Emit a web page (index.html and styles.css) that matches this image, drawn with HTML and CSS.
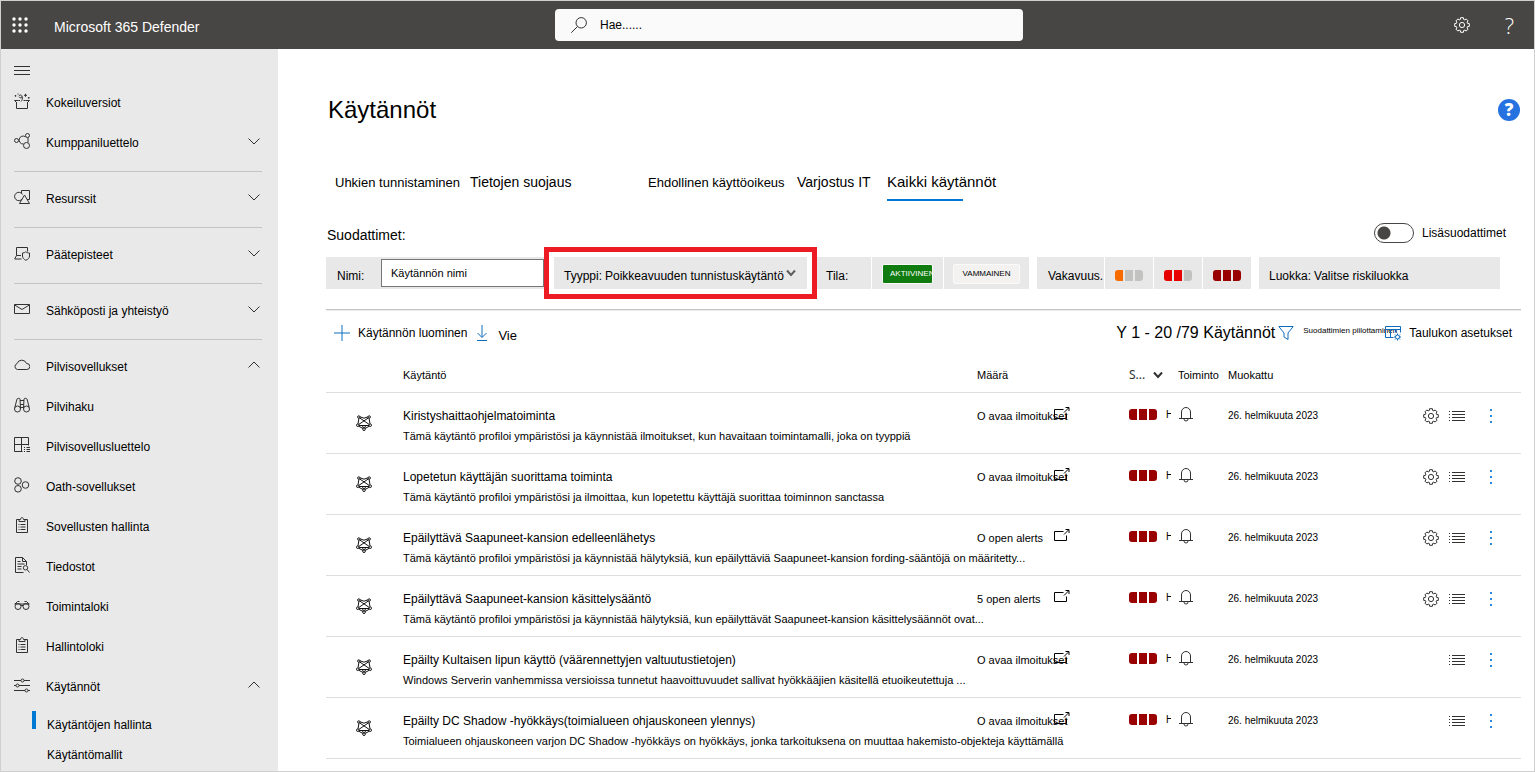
FILE: index.html
```html
<!DOCTYPE html>
<html lang="fi">
<head>
<meta charset="utf-8">
<meta name="viewport" content="width=device-width, initial-scale=1">
<title>Käytännöt - Microsoft 365 Defender</title>
<link rel="stylesheet" href="styles.css">
</head>
<body>
<svg class="sprite" aria-hidden="true">
  <symbol id="gear" viewBox="0 0 16 16"><path d="M15.3 6.6V9.4L13.6 9.6 13.1 10.9 14.1 12.1 12.1 14.1 10.9 13.1 9.6 13.6 9.4 15.3H6.6L6.4 13.6 5.1 13.1 3.9 14.1 1.9 12.1 2.9 10.9 2.4 9.6.7 9.4V6.600L2.4 6.4 2.9 5.1 1.9 3.9 3.9 1.9 5.1 2.9 6.4 2.4 6.6.7H9.4L9.6 2.4 10.9 2.9 12.1 1.9 14.1 3.9 13.1 5.1 13.6 6.4Z"/><circle cx="8" cy="8" r="2.6"/></symbol>
  <symbol id="down" viewBox="0 0 12 12"><path d="M.5 3.500 6 9l5.500-5.500"/></symbol>
  <symbol id="up" viewBox="0 0 12 12"><path d="M.5 8.500 6 3l5.500 5.500"/></symbol>
  <symbol id="gift" viewBox="0 0 16 16"><path d="M2.500 9v6.500h11V9M2.500 9.500.5 7.500h4M13.500 9.500l2-2h-4M4.500 7.500h1.500M9.500 7.500h2M5 3.200C5 1.500 8 1.500 8 3.500S5.500 5 5 3.800M8 3.500C9 5.500 8 7.500 7 8.500M11.500.8v3M10 2.300h3M1.500 2v1.600M.7 2.800h1.600M14.700 4v1.600M13.900 4.800h1.600M4 .5v1"/></symbol>
  <symbol id="partners" viewBox="0 0 16 16"><circle cx="2.500" cy="7.500" r="2"/><circle cx="13.500" cy="2.500" r="2"/><circle cx="12.500" cy="12.500" r="3"/><path d="M11.500 3.800A4 4 0 1 0 9.500 11M14 4.500v5"/></symbol>
  <symbol id="shapes" viewBox="0 0 16 16"><path d="M7.500 4V1.500h8v9h-2.500M10.500 6 5.500 14.500h10L10.500 6M8.300 9.800A4.200 4.200 0 1 1 8.500 5.500"/></symbol>
  <symbol id="device" viewBox="0 0 16 16"><path d="M2.500 10.500v-8h11v4M2.500 10.500.7 14h6.800M2.500 10.500H7M8.500 8c1.500 0 2.500-.5 3.300-1.200C12.700 7.500 13.700 8 15.500 8v3c0 2-1.500 3.300-3.700 4.300C10 14.300 8.500 13 8.500 11Z"/></symbol>
  <symbol id="mail" viewBox="0 0 16 16"><path d="M.5 3.500h15v9H.5ZM.7 4 8 8.500 15.300 4"/></symbol>
  <symbol id="cloud" viewBox="0 0 16 16"><path d="M3.500 12.500A3 3 0 0 1 3 6.700 5 5 0 0 1 12.500 6.500h.3a3 3 0 0 1 0 6Z"/></symbol>
  <symbol id="binoculars" viewBox="0 0 16 16"><circle cx="3.500" cy="12" r="3"/><circle cx="12.500" cy="12" r="3"/><path d="M.8 10.500 3 2c.3-.9 3-.9 3 0l.5 9.500M15.200 10.500 13 2c-.3-.9-3-.9-3 0l-.5 9.500M6 3.500h4M6.300 7.500h3.400M6.500 10.500h3"/></symbol>
  <symbol id="catalog" viewBox="0 0 16 16"><path d="M8.500 14.500h-8V.5h14v8M7.500.5v14M.5 7.500h14M10 10.500h1M12.500 10.500h3.500M10 12.500h1M12.500 12.500h3.500M10 14.500h1M12.500 14.500h3.500"/></symbol>
  <symbol id="oauth" viewBox="0 0 16 16"><circle cx="4" cy="4" r="3.300"/><circle cx="4" cy="11.800" r="3.300"/><circle cx="11.500" cy="8" r="3.300"/></symbol>
  <symbol id="clipboard" viewBox="0 0 16 16"><path d="M5 2.500H2.500v13h11v-13H11M5 4.500v-2h1.500C6.500 0 9.500 0 9.500 2.500H11v2ZM4.500 7.500h1M6.500 7.500h5M4.500 10h1M6.500 10h5M4.500 12.500h1M6.500 12.500h5"/></symbol>
  <symbol id="file" viewBox="0 0 16 16"><path d="M9.500 15.500h-8V.5h7l4 4V8M8.500.5v4h4M3.500 4.500h3M3.500 7h7M3.500 9.500h4M3.500 12h4M13 12.500l2.500 3"/><circle cx="11.500" cy="10.800" r="2.200"/></symbol>
  <symbol id="glasses" viewBox="0 0 16 16"><circle cx="4" cy="9.500" r="3"/><circle cx="12" cy="9.500" r="3"/><path d="M.5 7h15M1 7 3.500 4.500h2M15 7 12.500 4.500h-2M7 8.500h2"/></symbol>
  <symbol id="sliders" viewBox="0 0 16 16"><path d="M0 3.500h7M10 3.500h6M0 8.500h2M5 8.500h11M0 13.500h11M14 13.500h2"/><circle cx="8.500" cy="3.500" r="1.500"/><circle cx="3.500" cy="8.500" r="1.500"/><circle cx="12.500" cy="13.500" r="1.500"/></symbol>
  <symbol id="anomaly" viewBox="0 0 16 16"><path d="M4 1.800 8 3.200l4-1.400M3 3 2 8.800M13 3l1 5.800M3.800 3l9.300 6.400M12.200 3 2.900 9.400M3 10.500h10M2.700 11.200 7 13.500M13.300 11.200 9 13.500M6 11.500l2 1 2-1"/><circle cx="2.800" cy="2" r="1.200"/><circle cx="13.200" cy="2" r="1.200"/><circle cx="1.800" cy="10.200" r="1.300"/><circle cx="14.200" cy="10.200" r="1.300"/><circle cx="8" cy="14.200" r="1.300"/></symbol>
  <symbol id="popout" viewBox="0 0 16 14"><path d="M9.500 2.500h-9v9h12V6.500M10 5.500l4.500-4.500M11.500.5H15V4"/></symbol>
  <symbol id="bell" viewBox="0 0 14 16"><path d="M2.500 12V6a4.500 4.500 0 0 1 9 0v6M0 12.500h14M5 13a2 2 0 0 0 4 0"/></symbol>
  <symbol id="list" viewBox="0 0 16 16"><path d="M0 3.500h1M3 3.500h13M0 6.500h1M3 6.500h13M0 9.500h1M3 9.500h13M0 12.500h1M3 12.500h13"/></symbol>
  <symbol id="dots" viewBox="0 0 4 16"><path d="M1 1h2v2H1ZM1 7h2v2H1ZM1 13h2v2H1Z"/></symbol>
</svg>

<header class="topbar">
  <div class="brand">
    <button class="plain" aria-label="Sovellukset"><svg class="icon waffle" viewBox="0 0 16 16"><circle cx="2" cy="2" r="1.700"/><circle cx="8" cy="2" r="1.700"/><circle cx="14" cy="2" r="1.700"/><circle cx="2" cy="8" r="1.700"/><circle cx="8" cy="8" r="1.700"/><circle cx="14" cy="8" r="1.700"/><circle cx="2" cy="14" r="1.700"/><circle cx="8" cy="14" r="1.700"/><circle cx="14" cy="14" r="1.700"/></svg></button>
    <span class="brand-name">Microsoft 365 Defender</span>
  </div>
  <label class="search">
    <svg class="icon" viewBox="0 0 16 16"><circle cx="10.200" cy="5.800" r="5.200"/><path d="M6.500 9.500.3 15.700"/></svg>
    <input type="text" placeholder="Hae......" aria-label="Hae">
  </label>
  <div class="top-actions">
    <button class="plain" aria-label="Asetukset"><svg class="icon"><use href="#gear"/></svg></button>
    <button class="plain question" aria-label="Ohje">?</button>
  </div>
</header>

<div class="shell">
  <nav class="sidebar">
    <button class="plain menu" aria-label="Valikko"><svg class="icon" viewBox="0 0 16 16"><path d="M0 4.500h16M0 8.500h16M0 12.500h16"/></svg></button>
    <div class="group first">
      <a class="item" href="#"><svg class="icon"><use href="#gift"/></svg><span>Kokeiluversiot</span></a>
      <a class="item" href="#"><svg class="icon"><use href="#partners"/></svg><span>Kumppaniluettelo</span><svg class="chev"><use href="#down"/></svg></a>
    </div>
    <div class="group"><a class="item" href="#"><svg class="icon"><use href="#shapes"/></svg><span>Resurssit</span><svg class="chev"><use href="#down"/></svg></a></div>
    <div class="group"><a class="item" href="#"><svg class="icon"><use href="#device"/></svg><span>Päätepisteet</span><svg class="chev"><use href="#down"/></svg></a></div>
    <div class="group"><a class="item" href="#"><svg class="icon"><use href="#mail"/></svg><span>Sähköposti ja yhteistyö</span><svg class="chev"><use href="#down"/></svg></a></div>
    <div class="group last">
      <a class="item" href="#"><svg class="icon"><use href="#cloud"/></svg><span>Pilvisovellukset</span><svg class="chev"><use href="#up"/></svg></a>
      <a class="item" href="#"><svg class="icon"><use href="#binoculars"/></svg><span>Pilvihaku</span></a>
      <a class="item" href="#"><svg class="icon"><use href="#catalog"/></svg><span>Pilvisovellusluettelo</span></a>
      <a class="item" href="#"><svg class="icon"><use href="#oauth"/></svg><span>Oath-sovellukset</span></a>
      <a class="item" href="#"><svg class="icon"><use href="#clipboard"/></svg><span>Sovellusten hallinta</span></a>
      <a class="item" href="#"><svg class="icon"><use href="#file"/></svg><span>Tiedostot</span></a>
      <a class="item" href="#"><svg class="icon"><use href="#glasses"/></svg><span>Toimintaloki</span></a>
      <a class="item" href="#"><svg class="icon"><use href="#clipboard"/></svg><span>Hallintoloki</span></a>
      <a class="item" href="#"><svg class="icon"><use href="#sliders"/></svg><span>Käytännöt</span><svg class="chev"><use href="#up"/></svg></a>
      <a class="subitem current" href="#"><span>Käytäntöjen hallinta</span></a>
      <a class="subitem" href="#"><span>Käytäntömallit</span></a>
    </div>
  </nav>

  <main class="main">
    <div class="title-row">
      <h1>Käytännöt</h1>
      <button class="plain help" aria-label="Ohje">?</button>
    </div>

    <nav class="tabs">
      <a href="#">Uhkien tunnistaminen</a>
      <a class="mid" href="#">Tietojen suojaus</a>
      <a href="#">Ehdollinen käyttöoikeus</a>
      <a class="mid" href="#">Varjostus IT</a>
      <a class="active" href="#">Kaikki käytännöt</a>
    </nav>

    <div class="filter-head">
      <span class="filter-title">Suodattimet:</span>
      <label class="toggle"><input type="checkbox" role="switch"><span>Lisäsuodattimet</span></label>
    </div>

    <div class="filters">
      <div class="seg name"><label for="policy-name">Nimi:</label><input id="policy-name" type="text" placeholder="Käytännön nimi"></div>
      <div class="seg type"><label for="policy-type">Tyyppi:</label><select id="policy-type"><option>Poikkeavuuden tunnistuskäytäntö</option></select><svg class="caret" viewBox="0 0 10 10"><path d="M1 2.500 5 7l4-4.500"/></svg></div>
      <div class="seg-set">
        <div class="seg state">Tila:</div>
        <div class="seg on"><button class="chip green">AKTIIVINEN</button></div>
        <div class="seg off"><button class="chip">VAMMAINEN</button></div>
      </div>
      <div class="seg-set">
        <div class="seg severity-label">Vakavuus.</div>
        <button class="seg sev-cell" aria-label="Matala"><span class="sev low"><i></i><i></i><i></i></span></button>
        <button class="seg sev-cell" aria-label="Keskitaso"><span class="sev medium"><i></i><i></i><i></i></span></button>
        <button class="seg sev-cell" aria-label="Korkea"><span class="sev"><i></i><i></i><i></i></span></button>
      </div>
      <div class="seg category"><label for="category">Luokka:</label><select id="category"><option>Valitse riskiluokka</option></select></div>
    </div>

    <div class="toolbar">
      <button class="plain tool create"><svg class="icon blue" viewBox="0 0 16 16"><path d="M8 0v16M0 8h16"/></svg><span>Käytännön luominen</span></button>
      <button class="plain tool export"><svg class="icon blue arrow" viewBox="0 0 12 16"><path d="M6 0v12M1.500 8 6 12.500 10.500 8M1 15.500h10"/></svg><span>Vie</span></button>
      <span class="count">Y 1 - 20 /79 Käytännöt</span>
      <button class="plain tool hide"><svg class="icon blue" viewBox="0 0 16 16"><path d="M.8 1.500h14.400L10 8v6.500L6 12V8Z"/></svg><span>Suodattimien piilottaminen</span></button>
      <button class="plain tool settings"><svg class="icon blue" viewBox="0 0 16 16"><path d="M8.500 12.500h-8v-11h15v6M.5 4.500h15M5.500 4.500v8M10.500 4.500v3"/><circle cx="12.500" cy="12" r="2"/><path d="M12.500 8.500V10M12.500 14v1.500M9 12h1.500M14.500 12H16M10 9.500l1 1M14 13.500l1 1M15 9.500l-1 1M10 14.500l1-1"/></svg><span>Taulukon asetukset</span></button>
    </div>

    <table class="policies">
      <colgroup><col class="c-icon"><col><col class="c-count"><col class="c-sev"><col class="c-act"><col class="c-date"><col class="c-tools"></colgroup>
      <thead>
        <tr><th></th><th>Käytäntö</th><th>Määrä</th><th><span class="sort">S...<svg class="caret" viewBox="0 0 10 10"><path d="M1 2.500 5 7l4-4.500"/></svg></span></th><th>Toiminto</th><th>Muokattu</th><th></th></tr>
      </thead>
      <tbody>
        <tr>
          <td><svg class="icon policy-icon"><use href="#anomaly"/></svg></td>
          <td><a class="name-link" href="#">Kiristyshaittaohjelmatoiminta</a><p>Tämä käytäntö profiloi ympäristösi ja käynnistää ilmoitukset, kun havaitaan toimintamalli, joka on tyyppiä</p></td>
          <td><a class="alerts" href="#"><span>O avaa ilmoitukset</span><svg class="popout"><use href="#popout"/></svg></a></td>
          <td><div class="sev-wrap"><span class="sev"><i></i><i></i><i></i></span><span class="level">H</span></div></td>
          <td><svg class="bell"><use href="#bell"/></svg></td>
          <td class="date">26. helmikuuta 2023</td>
          <td><div class="tools"><button class="plain" aria-label="Muokkaa"><svg class="icon"><use href="#gear"/></svg></button><button class="plain" aria-label="Luettelo"><svg class="icon"><use href="#list"/></svg></button><button class="plain more" aria-label="Lisää"><svg class="dots"><use href="#dots"/></svg></button></div></td>
        </tr>
        <tr>
          <td><svg class="icon policy-icon"><use href="#anomaly"/></svg></td>
          <td><a class="name-link" href="#">Lopetetun käyttäjän suorittama toiminta</a><p>Tämä käytäntö profiloi ympäristösi ja ilmoittaa, kun lopetettu käyttäjä suorittaa toiminnon sanctassa</p></td>
          <td><a class="alerts" href="#"><span>O avaa ilmoitukset</span><svg class="popout"><use href="#popout"/></svg></a></td>
          <td><div class="sev-wrap"><span class="sev"><i></i><i></i><i></i></span><span class="level">H</span></div></td>
          <td><svg class="bell"><use href="#bell"/></svg></td>
          <td class="date">26. helmikuuta 2023</td>
          <td><div class="tools"><button class="plain" aria-label="Muokkaa"><svg class="icon"><use href="#gear"/></svg></button><button class="plain" aria-label="Luettelo"><svg class="icon"><use href="#list"/></svg></button><button class="plain more" aria-label="Lisää"><svg class="dots"><use href="#dots"/></svg></button></div></td>
        </tr>
        <tr>
          <td><svg class="icon policy-icon"><use href="#anomaly"/></svg></td>
          <td><a class="name-link" href="#">Epäilyttävä Saapuneet-kansion edelleenlähetys</a><p>Tämä käytäntö profiloi ympäristösi ja käynnistää hälytyksiä, kun epäilyttäviä Saapuneet-kansion fording-sääntöjä on määritetty...</p></td>
          <td><a class="alerts" href="#"><span>O open alerts</span><svg class="popout"><use href="#popout"/></svg></a></td>
          <td><div class="sev-wrap"><span class="sev"><i></i><i></i><i></i></span><span class="level">H</span></div></td>
          <td><svg class="bell"><use href="#bell"/></svg></td>
          <td class="date">26. helmikuuta 2023</td>
          <td><div class="tools"><button class="plain" aria-label="Muokkaa"><svg class="icon"><use href="#gear"/></svg></button><button class="plain" aria-label="Luettelo"><svg class="icon"><use href="#list"/></svg></button><button class="plain more" aria-label="Lisää"><svg class="dots"><use href="#dots"/></svg></button></div></td>
        </tr>
        <tr>
          <td><svg class="icon policy-icon"><use href="#anomaly"/></svg></td>
          <td><a class="name-link" href="#">Epäilyttävä Saapuneet-kansion käsittelysääntö</a><p>Tämä käytäntö profiloi ympäristösi ja käynnistää hälytyksiä, kun epäilyttävät Saapuneet-kansion käsittelysäännöt ovat...</p></td>
          <td><a class="alerts" href="#"><span>5 open alerts</span><svg class="popout"><use href="#popout"/></svg></a></td>
          <td><div class="sev-wrap"><span class="sev"><i></i><i></i><i></i></span><span class="level">H</span></div></td>
          <td><svg class="bell"><use href="#bell"/></svg></td>
          <td class="date">26. helmikuuta 2023</td>
          <td><div class="tools"><button class="plain" aria-label="Muokkaa"><svg class="icon"><use href="#gear"/></svg></button><button class="plain" aria-label="Luettelo"><svg class="icon"><use href="#list"/></svg></button><button class="plain more" aria-label="Lisää"><svg class="dots"><use href="#dots"/></svg></button></div></td>
        </tr>
        <tr>
          <td><svg class="icon policy-icon"><use href="#anomaly"/></svg></td>
          <td><a class="name-link" href="#">Epäilty Kultaisen lipun käyttö (väärennettyjen valtuutustietojen)</a><p>Windows Serverin vanhemmissa versioissa tunnetut haavoittuvuudet sallivat hyökkääjien käsitellä etuoikeutettuja ...</p></td>
          <td><a class="alerts" href="#"><span>O avaa ilmoitukset</span><svg class="popout"><use href="#popout"/></svg></a></td>
          <td><div class="sev-wrap"><span class="sev"><i></i><i></i><i></i></span><span class="level">H</span></div></td>
          <td><svg class="bell"><use href="#bell"/></svg></td>
          <td class="date">26. helmikuuta 2023</td>
          <td><div class="tools"><button class="plain" aria-label="Luettelo"><svg class="icon"><use href="#list"/></svg></button><button class="plain more" aria-label="Lisää"><svg class="dots"><use href="#dots"/></svg></button></div></td>
        </tr>
        <tr>
          <td><svg class="icon policy-icon"><use href="#anomaly"/></svg></td>
          <td><a class="name-link" href="#">Epäilty DC Shadow -hyökkäys(toimialueen ohjauskoneen ylennys)</a><p>Toimialueen ohjauskoneen varjon DC Shadow -hyökkäys on hyökkäys, jonka tarkoituksena on muuttaa hakemisto-objekteja käyttämällä</p></td>
          <td><a class="alerts" href="#"><span>O avaa ilmoitukset</span><svg class="popout"><use href="#popout"/></svg></a></td>
          <td><div class="sev-wrap"><span class="sev"><i></i><i></i><i></i></span><span class="level">H</span></div></td>
          <td><svg class="bell"><use href="#bell"/></svg></td>
          <td class="date">26. helmikuuta 2023</td>
          <td><div class="tools"><button class="plain" aria-label="Luettelo"><svg class="icon"><use href="#list"/></svg></button><button class="plain more" aria-label="Lisää"><svg class="dots"><use href="#dots"/></svg></button></div></td>
        </tr>
      </tbody>
    </table>
  </main>
</div>
</body>
</html>
```

FILE: styles.css
```css
* { box-sizing: border-box; }

body {
  margin: 0;
  min-height: 100vh;
  display: flex;
  flex-direction: column;
  border: 1px solid #d0d0d0;
  background: #fff;
  color: #000;
  font: 12px/20px "Liberation Sans", Arial, sans-serif;
}

a { color: inherit; text-decoration: none; }
button, input, select { font: inherit; color: inherit; }
input::placeholder { color: #000; opacity: 1; }

.sprite { position: absolute; width: 0; height: 0; }

svg { display: block; flex: none; fill: none; stroke: #323130; stroke-width: 1; }
.icon { width: 16px; height: 16px; }
.blue { stroke: #0f6cbd; }
.plain { display: flex; align-items: center; padding: 0; border: 0; background: none; cursor: pointer; }

/* Top bar */
.topbar {
  display: grid;
  grid-template-columns: 554fr 468fr 511fr;
  align-items: center;
  height: 48px;
  background: #484644;
  color: #fff;
}
.brand { display: flex; align-items: center; gap: 26px; padding-left: 11px; }
.brand-name { padding-top: 4px; font-size: 14px; }
.waffle { fill: #fff; stroke: none; }
.search {
  display: flex;
  align-items: center;
  gap: 13px;
  height: 32px;
  padding: 0 16px;
  border-radius: 4px;
  background: #fafafa;
}
.search input { flex: 1; min-width: 0; padding: 0; border: 0; outline: 0; background: none; color: #000; }
.top-actions { display: flex; justify-content: flex-end; align-items: center; gap: 35px; padding-right: 20px; }
.top-actions svg { stroke: #fff; }
.question { font: 300 22px/24px "Open Sans", sans-serif; color: #fff; }

.shell { display: flex; flex: 1; }

/* Side navigation */
.sidebar { flex: none; width: 277px; padding: 0 16px 0 13px; background: #e9e9e9; }
.menu { height: 32px; padding-top: 10px; }
.group { padding: 5px 0 10px; border-bottom: 1px solid #c4c4c4; }
.first { padding-top: 0; }
.last { padding-bottom: 0; border: 0; }
.item { display: flex; align-items: center; gap: 16px; height: 40px; }
.item span { flex: 1; padding-top: 4px; }
.chev { width: 12px; height: 12px; margin-right: 2px; }
.subitem { display: flex; align-items: center; height: 30px; margin-left: 18px; padding-left: 15px; position: relative; }
.subitem span { padding-top: 10px; }
.current::before { content: ""; position: absolute; left: 0; top: 6px; width: 4px; height: 18px; background: #0078d4; }

/* Page heading and tabs */
.main { flex: 1; min-width: 0; padding: 45px 13px 12px 48px; }
.title-row { display: flex; align-items: center; justify-content: space-between; padding: 0 1px 0 2px; }
h1 { margin: 0; font-size: 24px; font-weight: 400; line-height: 32px; }
.help {
  justify-content: center;
  width: 22px;
  height: 22px;
  border-radius: 50%;
  background: #2672e0;
  color: #fff;
  font: 800 17px/22px "Open Sans", sans-serif;
}
.tabs {
  display: grid;
  grid-template-columns: 135px 178px 149px 90px auto;
  justify-content: start;
  align-items: baseline;
  margin: 46px 0 21px;
  padding-left: 9px;
  font-size: 13px;
}
.tabs a { padding-bottom: 9px; white-space: nowrap; }
.tabs .mid { font-size: 14px; }
.tabs .active { position: relative; font-size: 15px; }
.active::after { content: ""; position: absolute; left: 0; bottom: 0; width: 70%; height: 2px; background: #0078d4; }

/* Filters */
.filter-head { display: flex; justify-content: space-between; align-items: center; height: 20px; padding: 0 15px 0 1px; }
.filter-title { padding-top: 4px; font-size: 14px; }
.toggle { display: flex; align-items: center; gap: 8px; }
.toggle input {
  appearance: none;
  width: 40px;
  height: 20px;
  margin: 0;
  border: 1px solid #484644;
  border-radius: 10px;
  background: radial-gradient(circle at 9px 9px, #484644 6px, transparent 7px);
}
.filters { display: flex; align-items: center; height: 32px; margin: 14px 0 20px; }
.seg, .seg-set { display: flex; align-items: center; height: 32px; white-space: nowrap; }
.seg { border: 0; background: #e8e8e8; }
.seg-set { gap: 1px; }
.seg label, .state, .severity-label { padding-top: 5px; }
.name { width: 218px; padding-left: 11px; justify-content: space-between; }
.name input { width: 163px; height: 28px; padding: 0 9px; border: 1px solid #767676; background: #fff; font-size: 11px; }
.type { position: relative; width: 253px; margin: 0 10px; padding-left: 10px; gap: 3px; }
.type::after { content: ""; position: absolute; inset: -10px; border: 5px solid #ed1c24; pointer-events: none; }
.seg select { appearance: none; padding: 5px 0 0; border: 0; background: none; }
.type select { width: 182px; margin-right: -4px; }
.caret { width: 10px; height: 10px; stroke: #605e5c; stroke-width: 2; }
.state { width: 54px; padding-left: 9px; }
.on { width: 71px; padding: 2px 0 0 10px; }
.off { width: 85px; padding: 2px 0 0 9px; }
.chip {
  width: 67px;
  height: 20px;
  padding: 0 8px;
  overflow: hidden;
  border: 1px solid #fafafa;
  border-radius: 2px;
  background: #f3f2f1;
  font-size: 8px;
  line-height: 18px;
}
.green { width: 51px; padding: 0 0 0 7px; background: #107c10; color: #fff; text-align: left; }
.severity-label { width: 67px; padding-left: 11px; overflow: hidden; }
.seg-set + .seg-set { margin: 0 8px; }
.sev-cell { width: 48px; padding: 4px 0 0 10px; }
.category { flex: 0 1 241px; padding-left: 10px; gap: 3px; }
.sev { display: flex; gap: 2px; }
.sev i { width: 8px; height: 11px; background: #990000; }
.sev i:first-child { border-radius: 3px 0 0 3px; }
.sev i:last-child { border-radius: 0 3px 3px 0; }
.low i, .medium i { background: #c2c2c0; }
.low i:first-child { background: #f76b00; }
.medium i:nth-child(-n+2) { background: #e60000; }

/* Command bar */
.toolbar {
  display: flex;
  align-items: center;
  height: 47px;
  padding: 0 9px 0 8px;
  border-top: 1px solid #c4c4c4;
  box-shadow: inset 0 1px #ebebeb;
}
.tool { gap: 8px; white-space: nowrap; }
.export { gap: 10px; padding-left: 9px; font-size: 13px; }
.export span { padding-top: 5px; }
.arrow { width: 12px; }
.count { margin-left: auto; font-size: 16px; }
.hide { padding-left: 3px; gap: 9px; font-size: 8px; }
.hide span { width: 82px; height: 24px; }

/* Policy table */
.policies { width: 100%; table-layout: fixed; border-collapse: collapse; }
.c-icon { width: 77px; }
.c-count { width: 152px; }
.c-sev { width: 49px; }
.c-act { width: 50px; }
.c-date { width: 195px; }
.c-tools { width: 98px; }
th { height: 36px; padding: 3px 0 0; border-bottom: 1px solid #dedede; font-size: 11px; font-weight: 400; text-align: left; }
.sort { display: flex; align-items: center; gap: 8px; font: 12px/20px "Noto Sans", sans-serif; color: #323130; }
.sort .caret { stroke: #323130; }
td { height: 61px; padding: 13px 0 7px; border-bottom: 1px solid #dedede; vertical-align: top; white-space: nowrap; }
td p { margin: 0; font-size: 11px; }
.name-link { display: block; }
.policy-icon { margin: 9px 0 0 30px; stroke: #111; }
.alerts { display: flex; font-size: 11px; }
.alerts span { width: 77px; }
.popout { width: 16px; height: 14px; margin-top: 1px; stroke: #000; }
.sev-wrap { display: flex; align-items: center; gap: 9px; height: 18px; }
.level { width: 5px; overflow: hidden; font-size: 10px; }
.bell { width: 14px; height: 16px; margin-left: 1px; }
.date { font-size: 10px; }
.tools { display: flex; justify-content: flex-end; gap: 10px; height: 20px; padding-right: 28px; }
.more { padding-left: 14px; }
.dots { width: 4px; height: 16px; fill: #2b88d8; stroke: none; }
```
